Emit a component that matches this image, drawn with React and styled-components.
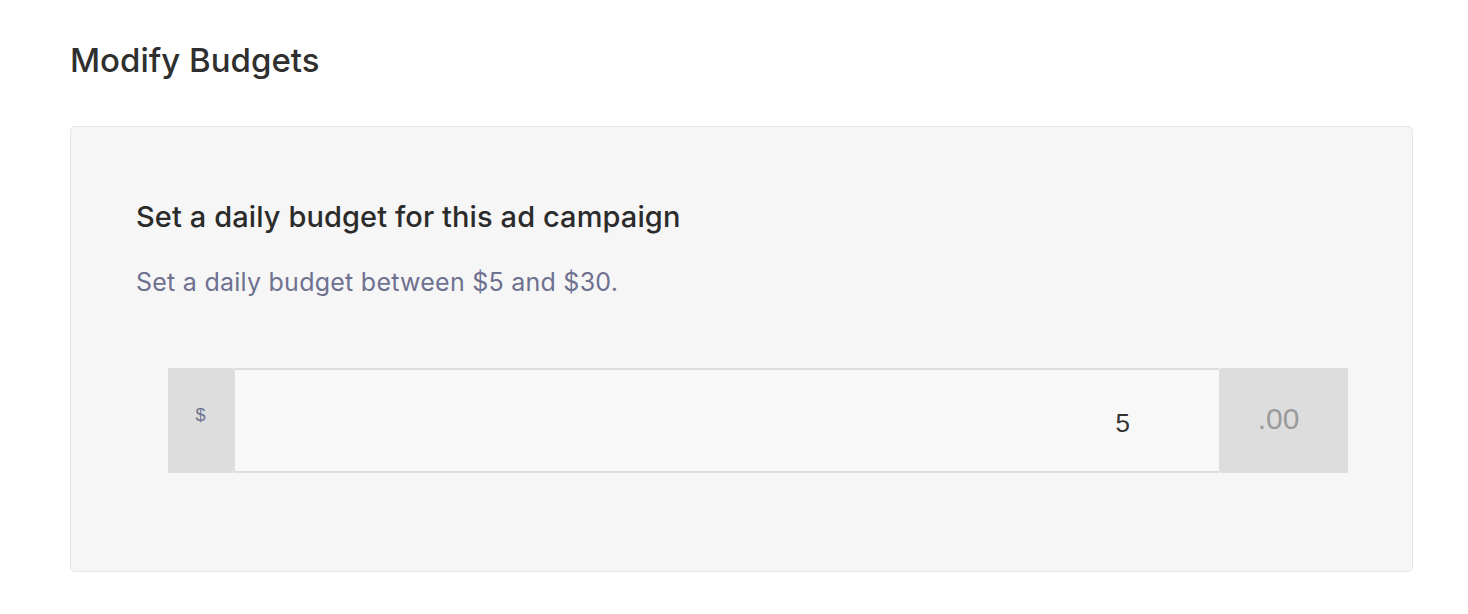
import styled, { createGlobalStyle } from 'styled-components';

const GlobalStyle = createGlobalStyle`
  body {
    margin: 0;
    background: #ffffff;
    font-family: Inter, "Noto Sans", sans-serif;
    color: #333333;
  }
`;

const Page = styled.div`
  padding: 40px 55px 40px 70px;
`;

const Title = styled.h1`
  margin: 0 0 46px;
  font-size: 33px;
  line-height: 40px;
  font-weight: 500;
  letter-spacing: 0;
  color: #2f2f2f;
`;

const Card = styled.section`
  background: #f6f6f6;
  border: 1px solid #e6e6e6;
  border-radius: 5px;
  padding: 72px 64px 98px 65px;
`;

const CardTitle = styled.h2`
  margin: 0;
  font-size: 29px;
  line-height: 36px;
  font-weight: 500;
  letter-spacing: 0.1px;
  color: #2b2b2b;
`;

const Hint = styled.p`
  margin: 32px 0 0;
  font-size: 25px;
  line-height: 30px;
  font-weight: 400;
  letter-spacing: 0.25px;
  color: #6e7190;
`;

const InputGroup = styled.div`
  display: flex;
  height: 105px;
  margin: 71px 0 0 32px;
`;

const Addon = styled.div`
  display: flex;
  align-items: center;
  justify-content: center;
  box-sizing: border-box;
  flex: 0 0 ${(p) => p.$width}px;
  background: #dddddd;
  color: ${(p) => p.$color};
  font-family: "Liberation Sans", Arial, sans-serif;
  font-size: ${(p) => p.$size}px;
  padding-bottom: ${(p) => p.$lift}px;
  padding-right: ${(p) => p.$shift}px;
`;

const Field = styled.input`
  flex: 1;
  min-width: 0;
  box-sizing: border-box;
  height: 100%;
  border: 2px solid #dedede;
  border-radius: 3px;
  background: #f8f8f8;
  text-align: right;
  padding: 6px 89px 0 0;
  font-family: "Liberation Sans", Arial, sans-serif;
  font-size: 26px;
  color: #333333;
  outline: none;
`;

export default function App() {
  return (
    <>
      <GlobalStyle />
      <Page>
        <Title>Modify Budgets</Title>
        <Card>
          <CardTitle>Set a daily budget for this ad campaign</CardTitle>
          <Hint>Set a daily budget between $5 and $30.</Hint>
          <InputGroup>
            <Addon $width={65} $size={18} $color="#6e7190" $lift={10} $shift={0}>$</Addon>
            <Field type="text" defaultValue="5" />
            <Addon $width={127} $size={30} $color="#9a9a9a" $lift={4} $shift={12}>.00</Addon>
          </InputGroup>
        </Card>
      </Page>
    </>
  );
}
